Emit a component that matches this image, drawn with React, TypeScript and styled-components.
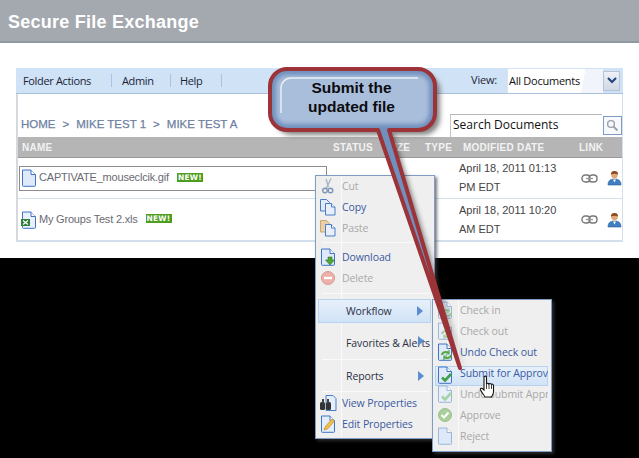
import React from "react";
import styled, { createGlobalStyle } from "styled-components";

const Global = createGlobalStyle`
  html, body { margin: 0; padding: 0; background: #000; }
  * { box-sizing: border-box; }
`;

const Page = styled.div`
  position: relative;
  width: 639px;
  height: 458px;
  overflow: hidden;
  background: #000;
  font-family: "Liberation Sans", Arial, sans-serif;
`;
const Sheet = styled.div`
  height: 258px;
  background: #fff;
  display: flex;
  flex-direction: column;
`;
const Banner = styled.header`
  height: 43px;
  flex-shrink: 0;
  background: #a4a9b0;
  border-bottom: 2px solid #8f97a3;
  padding: 12px 0 0 8px;
  color: #fff;
  font-size: 18px;
  line-height: 20px;
  font-weight: bold;
  letter-spacing: 0.25px;
`;
const Panel = styled.section`
  margin: 25px 16px 0;
  width: 607px;
  height: 174px;
  flex-shrink: 0;
  border-left: 2px solid #d5d8dc;
  border-right: 1px solid #d5dfec;
  border-bottom: 2px solid #d3dfec;
  display: flex;
  flex-direction: column;
`;
const Toolbar = styled.div`
  height: 26px;
  flex-shrink: 0;
  margin-left: -2px;
  margin-right: -1px;
  background: #d0e2f5;
  border-bottom: 1px solid #a9bfdb;
  display: flex;
  align-items: center;
  font-family: "Open Sans", sans-serif;
  font-size: 11px;
  color: #1a2438;
`;
const ToolItem = styled.span<{ $w: number; $pad: number }>`
  width: ${(p) => p.$w}px;
  height: 13px;
  line-height: 13px;
  padding-left: ${(p) => p.$pad}px;
  border-right: 1px solid #a9c3e2;
  letter-spacing: -0.35px;
  white-space: nowrap;
`;
const ViewLabel = styled.span`
  margin-left: auto;
  margin-right: 10px;
  position: relative;
  top: -1px;
  letter-spacing: -0.2px;
`;
const SelectBox = styled.div`
  width: 96px;
  height: 24px;
  background: linear-gradient(100deg, #fff 78%, #f1f5fb 78%);
  border-left: 1px solid #dde3ea;
  padding-left: 1px;
  line-height: 24px;
  font-family: "Open Sans", sans-serif;
  font-size: 11px;
  letter-spacing: -0.25px;
  color: #111;
`;
const SelectArrow = styled.div`
  width: 17px;
  height: 20px;
  margin: 0 3px 0 0;
  background: linear-gradient(#eef1f6, #cfd8e4);
  border: 1px solid #b4c3d6;
  display: flex;
  align-items: center;
  justify-content: center;
`;
const SearchRow = styled.div`
  height: 43px;
  flex-shrink: 0;
  display: flex;
  align-items: flex-end;
  padding-left: 3px;
`;
const Crumbs = styled.div`
  font-size: 11.5px;
  color: #6e7fa0;
  -webkit-text-stroke: 0.25px #6e7fa0;
  padding-bottom: 6px;
  line-height: 14px;
  white-space: nowrap;
  display: flex;
  gap: 7px;
`;
const SearchInput = styled.div`
  margin-left: auto;
  width: 152px;
  height: 23px;
  border-top: 1px solid #b8b8b8;
  border-left: 1px solid #c4c4c4;
  background: #fff;
  padding-left: 2px;
  font-family: "Open Sans", sans-serif;
  font-size: 12px;
  line-height: 20px;
  color: #111;
`;
const SearchBtn = styled.div`
  width: 19px;
  height: 19px;
  margin: 0 0 2px 1px;
  border: 1px solid #7f9cc4;
  background: #f7f9fc;
  display: flex;
  align-items: center;
  justify-content: center;
`;
const HeadRow = styled.div`
  height: 21px;
  flex-shrink: 0;
  background: #b5b5b5;
  border-bottom: 1px solid #999;
  display: grid;
  grid-template-columns: 315px 54px 38px 38px 116px 1fr;
  align-items: center;
  color: #f2f2f2;
  font-size: 10px;
  font-weight: bold;
  letter-spacing: 0.25px;
`;
const HeadCell = styled.span<{ $pad?: number }>`
  padding-left: ${(p) => p.$pad ?? 0}px;
`;
const Row = styled.div`
  height: 41px;
  flex-shrink: 0;
  border-bottom: 1px solid #d4dfec;
  display: grid;
  grid-template-columns: 441px 122px 1fr;
  align-items: center;
  &:last-child { border-bottom: 0; }
`;
const NameCell = styled.div<{ $selected?: boolean }>`
  height: 25px;
  margin-left: 1px;
  width: 308px;
  border: ${(p) => (p.$selected ? "1px solid #8c8c8c" : "1px solid transparent")};
  display: flex;
  align-items: center;
  gap: 1px;
  font-size: 11px;
  color: #6a6a72;
`;
const FileName = styled.span`
  position: relative;
  top: -1px;
  white-space: nowrap;
  letter-spacing: -0.2px;
`;
const NewTag = styled.span`
  margin-left: 7px;
  position: relative;
  top: -1px;
  width: 26px;
  height: 9px;
  background: #4f9d1f;
  color: #fff;
  font-family: "DejaVu Sans", sans-serif;
  font-size: 7.5px;
  line-height: 9px;
  font-weight: bold;
  text-align: center;
  letter-spacing: 0.2px;
`;
const DateCell = styled.div`
  font-size: 11px;
  line-height: 19px;
  color: #444;
  width: 112px;
  letter-spacing: -0.02px;
`;
const LinkCell = styled.div`
  display: flex;
  align-items: center;
  gap: 9px;
`;

/* overlays */
const Menu = styled.div<{ $x: number; $y: number; $w: number; $h: number; $rail: number }>`
  position: absolute;
  left: ${(p) => p.$x}px;
  top: ${(p) => p.$y}px;
  width: ${(p) => p.$w}px;
  height: ${(p) => p.$h}px;
  background: linear-gradient(90deg, #efefef ${(p) => p.$rail}px, #fafafa ${(p) => p.$rail}px, #fafafa ${(p) => p.$rail + 1}px, #efefef ${(p) => p.$rail + 1}px);
  border: 1px solid #7f9cc4;
  box-shadow: 2px 2px 3px rgba(60, 60, 60, 0.7);
  display: flex;
  flex-direction: column;
  & > :first-child { margin-top: -1px; }
`;
const Item = styled.div<{ $h?: number; $top?: number; $tone?: "on" | "off" | "dark"; $active?: boolean; $pad?: number; $inset?: number }>`
  position: relative;
  height: ${(p) => p.$h ?? 21}px;
  flex-shrink: 0;
  overflow: hidden;
  display: flex;
  align-items: center;
  margin: 0 ${(p) => p.$inset ?? (p.$active ? 3 : 0)}px 0 ${(p) => (p.$active ? 2 : 0)}px;
  padding-left: ${(p) => (p.$pad ?? 26) - (p.$active ? 2 : 0)}px;
  padding-top: ${(p) => p.$top ?? 0}px;
  font-family: "Open Sans", sans-serif;
  font-size: 10.5px;
  letter-spacing: -0.1px;
  white-space: nowrap;
  color: ${(p) => (p.$tone === "off" ? "#a9a9a9" : p.$tone === "dark" ? "#2b3146" : "#3b5aa0")};
  background: ${(p) => (p.$active ? "linear-gradient(#e8f1fb, #cfe2f6)" : "transparent")};
  box-shadow: ${(p) => (p.$active ? "inset 0 0 0 1px #b9d3ef" : "none")};
`;
const HoverItem = styled(Item)`
  height: 20px;
  margin-top: 4px;
  margin-bottom: -3px;
  padding-bottom: 6px;
`;
const Sep = styled.div<{ $h: number }>`
  height: ${(p) => p.$h}px;
  flex-shrink: 0;
  display: flex;
  align-items: center;
  padding: 0 5px 0 6px;
  &::after { content: ""; flex: 1; height: 1px; background: #fafafa; }
`;
const IconSlot = styled.span<{ $left?: number; $top?: number }>`
  position: absolute;
  left: ${(p) => p.$left ?? 3}px;
  top: ${(p) => p.$top ?? 2}px;
  width: 18px;
  height: 18px;
`;
const Arrow = styled.span<{ $r: number }>`
  position: absolute;
  right: ${(p) => p.$r}px;
  top: 50%;
  margin-top: -5px;
  width: 0;
  height: 0;
  border-left: 6px solid #5b8bd0;
  border-top: 5px solid transparent;
  border-bottom: 5px solid transparent;
`;
const Callout = styled.div`
  position: absolute;
  left: 262px;
  top: 60px;
  width: 210px;
  height: 320px;
`;
const CalloutArt = styled.svg`
  position: absolute;
  inset: 0;
  overflow: visible;
`;
const CalloutText = styled.div`
  position: absolute;
  left: 7px;
  top: 18px;
  width: 165px;
  text-align: center;
  font-size: 15.5px;
  line-height: 19px;
  font-weight: bold;
  color: #0c0c10;
`;
const Hand = styled.svg`
  position: absolute;
  left: 479px;
  top: 375px;
`;

const Doc = ({ fill = "#dfe9f9", line = "#3f74c4", children }: { fill?: string; line?: string; children?: React.ReactNode }) => (
  <svg width="18" height="18" viewBox="0 0 18 18">
    <path d="M2.500 1h8.500l4.500 4.500v11a.8.8 0 0 1-.8.8H3.300a.8.8 0 0 1-.8-.8z" fill={fill} stroke={line} />
    <path d="M11 1v4.500h4.500" fill="#fff" stroke={line} />
    {children}
  </svg>
);
const Copy = ({ fill = "#dfeafa", line = "#4a7cc8" }: { fill?: string; line?: string }) => (
  <svg width="18" height="18" viewBox="0 0 18 18">
    <path d="M1.500 1.500h6l3 3V13h-9z" fill={fill} stroke={line} />
    <path d="M6.500 5.500h6l3.500 3.500v8H6.500z" fill="#e6effb" stroke="#4a7cc8" />
    <path d="M12.500 5.500V9H16" fill="#fff" stroke="#4a7cc8" />
  </svg>
);
const Scissors = () => (
  <svg width="18" height="18" viewBox="0 0 18 18" fill="none" stroke="#7f96bb" strokeWidth="1.400">
    <path d="M12 1.500 7.500 11M7 2l2.500 8" stroke="#a9b4c4" />
    <circle cx="6" cy="13.500" r="2.300" />
    <circle cx="11.500" cy="13.500" r="2.300" />
  </svg>
);
const Badge = ({ c }: { c: string }) => <path d="M6 11.500l3 3 6-6.500" fill="none" stroke={c} strokeWidth="2.600" />;
const Down = () => <path d="M9 9h4v3h2.500L11 17l-4.500-5H9z" fill="#4fa53a" stroke="#2e7d27" strokeWidth=".6" />;
const Swap = ({ c = "#57a843" }: { c?: string }) => (
  <g fill="none" stroke={c} strokeWidth="2">
    <path d="M6 12a4 3 0 0 1 7-2" />
    <path d="M15 12a4 3 0 0 1-7 2" />
    <path d="M13 7v4h-3M8 17v-4h3" strokeWidth="1.200" />
  </g>
);
const Chain = () => (
  <svg width="17" height="9" viewBox="0 0 17 9" fill="none" stroke="#777" strokeWidth="1.400">
    <rect x="1" y="1" width="8" height="7" rx="3.200" />
    <rect x="8" y="1" width="8" height="7" rx="3.200" />
    <path d="M5 4.500h7" stroke="#999" />
  </svg>
);
const Person = () => (
  <svg width="15" height="16" viewBox="0 0 15 16">
    <path d="M1 15c0-4 2-6 6.500-6s6.500 2 6.500 6z" fill="#3f7ec0" stroke="#2b5e98" strokeWidth=".6" />
    <circle cx="7.500" cy="5" r="3.300" fill="#e0a878" />
    <path d="M4 4.500C4 1.500 5.800 1 7.500 1s3.500.6 3.500 3.500C9 3.500 6 3.500 4 4.500z" fill="#8b4a22" />
    <path d="M6 9.500l1.500 3 1.500-3z" fill="#fff" />
  </svg>
);
const Glass = () => (
  <svg width="13" height="13" viewBox="0 0 13 13" fill="none" stroke="#9aa2ad" strokeWidth="1.400">
    <circle cx="5" cy="5" r="3.400" />
    <path d="M7.600 7.600 11.500 11.500" strokeWidth="2" />
  </svg>
);

const IconedItem = ({ icon, children, tone, pad, inset }: { icon: React.ReactNode; children: React.ReactNode; tone?: "on" | "off" | "dark"; pad?: number; inset?: number }) => (
  <Item $tone={tone} $pad={pad} $inset={inset}>
    <IconSlot>{icon}</IconSlot>
    {children}
  </Item>
);

const balloon =
  "M25 9h131a17 17 0 0 1 17 17v27a17 17 0 0 1-17 17h-29L198 308 116 70H25a17 17 0 0 1-17-17V26A17 17 0 0 1 25 9z";

export default function App() {
  return (
    <Page>
      <Global />
      <Sheet>
        <Banner>Secure File Exchange</Banner>
        <Panel>
          <Toolbar>
            <ToolItem $w={96} $pad={7}>Folder Actions</ToolItem>
            <ToolItem $w={59} $pad={10}>Admin</ToolItem>
            <ToolItem $w={51} $pad={9}>Help</ToolItem>
            <ViewLabel>View:</ViewLabel>
            <SelectBox>All Documents</SelectBox>
            <SelectArrow>
              <svg width="10" height="7" viewBox="0 0 10 7"><path d="M1 1l4 4 4-4" fill="none" stroke="#23467f" strokeWidth="2.200" /></svg>
            </SelectArrow>
          </Toolbar>
          <SearchRow>
            <Crumbs>
              <span>HOME</span><span>&gt;</span><span>MIKE TEST 1</span><span>&gt;</span><span>MIKE TEST A</span>
            </Crumbs>
            <SearchInput>Search Documents</SearchInput>
            <SearchBtn><Glass /></SearchBtn>
          </SearchRow>
          <HeadRow>
            <HeadCell $pad={4}>NAME</HeadCell>
            <HeadCell>STATUS</HeadCell>
            <HeadCell>SIZE</HeadCell>
            <HeadCell>TYPE</HeadCell>
            <HeadCell>MODIFIED DATE</HeadCell>
            <HeadCell>LINK</HeadCell>
          </HeadRow>
          <Row>
            <NameCell $selected>
              <Doc />
              <FileName>CAPTIVATE_mouseclcik.gif</FileName>
              <NewTag>NEW!</NewTag>
            </NameCell>
            <DateCell>April 18, 2011 01:13 PM EDT</DateCell>
            <LinkCell><Chain /><Person /></LinkCell>
          </Row>
          <Row>
            <NameCell>
              <Doc fill="#eaf1fb">
                <path d="M1 8h9v7H1z" fill="#2f7d3a" />
                <path d="M3 9.500l5 4M8 9.500l-5 4" stroke="#fff" strokeWidth="1.200" />
              </Doc>
              <FileName>My Groups Test 2.xls</FileName>
              <NewTag>NEW!</NewTag>
            </NameCell>
            <DateCell>April 18, 2011 10:20 AM EDT</DateCell>
            <LinkCell><Chain /><Person /></LinkCell>
          </Row>
        </Panel>
      </Sheet>

      <Menu $x={315} $y={175} $w={120} $h={264} $rail={25}>
        <IconedItem tone="off" icon={<Scissors />}>Cut</IconedItem>
        <IconedItem icon={<Copy />}>Copy</IconedItem>
        <IconedItem tone="off" icon={<Copy fill="#eacfa8" line="#c9a878" />}>Paste</IconedItem>
        <Sep $h={8} />
        <IconedItem icon={<Doc><Down /></Doc>}>Download</IconedItem>
        <IconedItem tone="off" icon={<svg width="18" height="18" viewBox="0 0 18 18"><circle cx="9" cy="9" r="6.500" fill="#eeb0a8" stroke="#d59a92" /><path d="M5 9h8" stroke="#fff" strokeWidth="2.400" /></svg>}>Delete</IconedItem>
        <Sep $h={11} />
        <Item $active $tone="dark" $h={24} $pad={30}>Workflow<Arrow $r={8} /></Item>
        <Item $tone="dark" $h={36} $top={4} $pad={30}>Favorites &amp; Alerts<Arrow $r={10} /></Item>
        <Sep $h={1} />
        <Item $tone="dark" $h={31} $pad={30}>Reports<Arrow $r={10} /></Item>
        <Sep $h={1} />
        <IconedItem icon={<svg width="18" height="18" viewBox="0 0 18 18"><path d="M7 1.500h7l3 3v12H7z" fill="#e4eefb" stroke="#4a7cc8" /><rect x="1" y="8" width="5" height="8" rx="1.500" fill="#333" /><rect x="7" y="8" width="5" height="8" rx="1.500" fill="#333" /><path d="M3 5h2v4H3zM8 5h2v4H8z" fill="#444" /></svg>}>View Properties</IconedItem>
        <IconedItem icon={<Doc fill="#e4eefb"><path d="M5 15l1-3 7-8 2.500 2-7 8z" fill="#f1c04a" stroke="#c08a20" strokeWidth=".7" /></Doc>}>Edit Properties</IconedItem>
      </Menu>

      <Menu $x={432} $y={299} $w={120} $h={153} $rail={25}>
        <IconedItem tone="off" pad={27} inset={3} icon={<Doc fill="#e8eff8" line="#9db6d8"><Swap c="#a8cfa0" /></Doc>}>Check in</IconedItem>
        <IconedItem tone="off" pad={27} inset={3} icon={<Doc fill="#e8eff8" line="#9db6d8"><Swap c="#a8cfa0" /></Doc>}>Check out</IconedItem>
        <IconedItem pad={27} inset={3} icon={<Doc><Swap /></Doc>}>Undo Check out</IconedItem>
        <HoverItem $active $pad={27} $inset={3}>
          <IconSlot $left={1} $top={0}><Doc><Badge c="#3fa24a" /></Doc></IconSlot>
          Submit for Approval
        </HoverItem>
        <IconedItem tone="off" pad={27} inset={3} icon={<Doc fill="#e8eff8" line="#9db6d8"><Badge c="#a8d2a8" /></Doc>}>Undo Submit Approval</IconedItem>
        <IconedItem tone="off" pad={27} inset={3} icon={<svg width="18" height="18" viewBox="0 0 18 18"><circle cx="9" cy="9" r="6.500" fill="#a9cf9a" stroke="#9cc08c" /><path d="M5.500 9l2.500 2.500 4.500-5" fill="none" stroke="#fff" strokeWidth="2" /></svg>}>Approve</IconedItem>
        <IconedItem tone="off" pad={27} inset={3} icon={<Doc fill="#dde9f8" line="#9db6d8" />}>Reject</IconedItem>
      </Menu>

      <Callout>
        <CalloutArt width="210" height="320" viewBox="0 0 210 320">
          <defs>
            <linearGradient id="cf" x1="0" y1="0" x2="0" y2="1">
              <stop offset="0" stopColor="#a9bedb" />
              <stop offset="0.2" stopColor="#a9bedb" />
              <stop offset="1" stopColor="#7b9cc6" />
            </linearGradient>
            <filter id="sh" x="-20%" y="-20%" width="140%" height="140%">
              <feGaussianBlur stdDeviation="2.500" />
            </filter>
            <filter id="gl" x="-20%" y="-20%" width="140%" height="140%">
              <feGaussianBlur stdDeviation="2" />
            </filter>
            <clipPath id="inner"><path d={balloon} /></clipPath>
          </defs>
          <path d={balloon} fill="#222" opacity=".55" filter="url(#sh)" transform="translate(5 5)" />
          <path d={balloon} fill="url(#cf)" />
          <g clipPath="url(#inner)">
            <path d={balloon} fill="none" stroke="#6f90bd" strokeWidth="12" filter="url(#gl)" />
          </g>
          <path d={balloon} fill="none" stroke="#9c3339" strokeWidth="4" strokeLinejoin="round" />
          <path d="M19 53V28a10 10 0 0 1 10-10H156" fill="none" stroke="#f4f7fb" strokeOpacity=".9" strokeWidth="1.400" />
        </CalloutArt>
        <CalloutText>Submit the<br />updated file</CalloutText>
      </Callout>

      <Hand width="18" height="24" viewBox="0 0 18 24">
        <path d="M5 2c1-1.500 2.500-1 2.500.5V9c.3-1 2-1 2.400 0 .5-.8 2-.7 2.400.4.700-.5 2.200-.2 2.200 1.200V17c0 2-1 3-2 5H6c-1-2-3-4-4.500-7-.7-1.400.7-2.500 1.800-1.500L5 15z" fill="#fff" stroke="#111" strokeWidth="1.100" />
        <path d="M7.500 9v5M10 9v5M12.500 10v4" stroke="#111" strokeWidth=".8" />
      </Hand>
    </Page>
  );
}
